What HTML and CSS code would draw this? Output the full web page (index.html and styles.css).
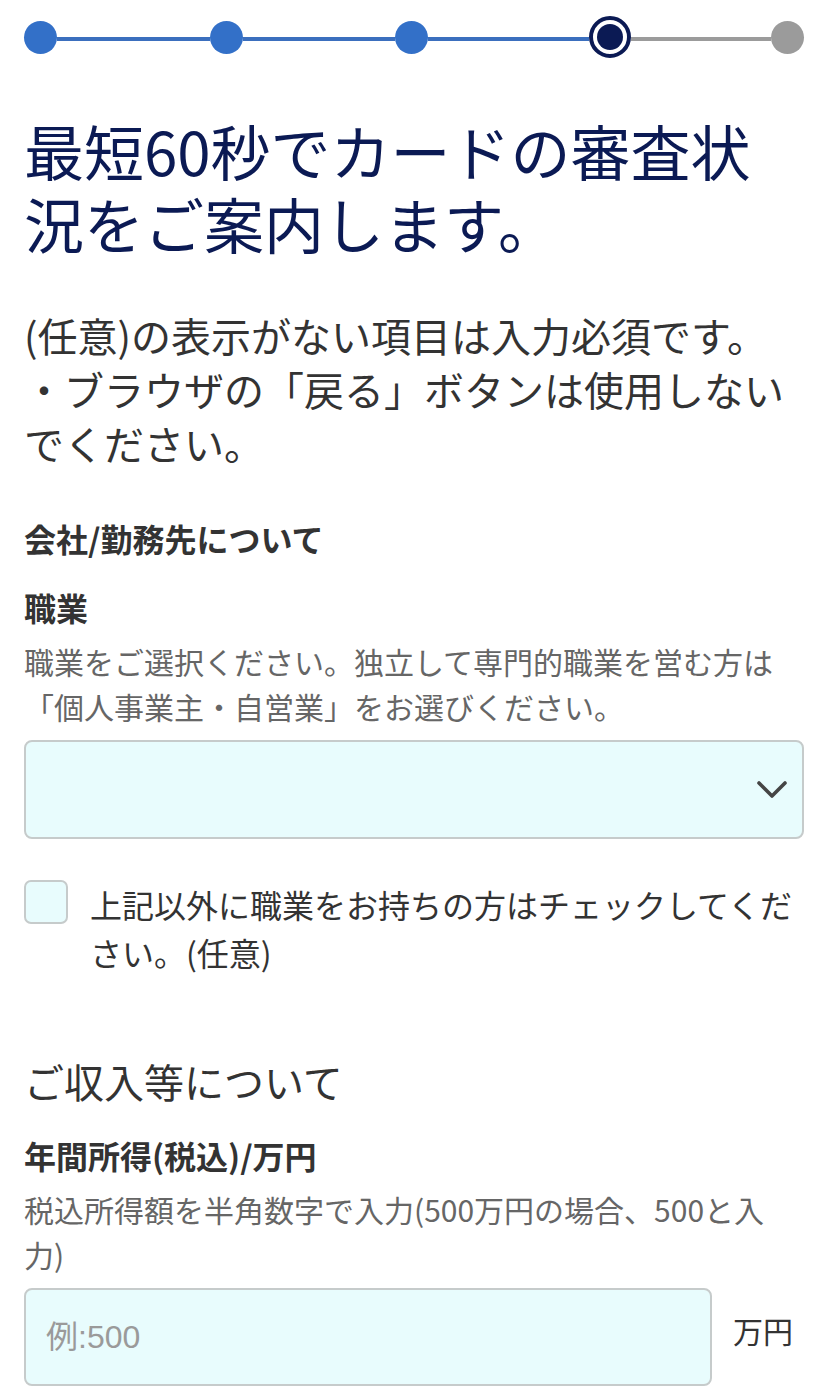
FILE: index.html
```html
<!DOCTYPE html>
<html lang="ja">
<head>
  <meta charset="UTF-8" />
  <meta name="viewport" content="width=device-width, initial-scale=1" />
  <title>お申し込み</title>
  <link rel="stylesheet" href="styles.css">
</head>
<body>
  <!-- Progress steps -->
  <div class="stepper">
    <span class="dot done"></span>
    <span class="bar done"></span>
    <span class="dot done"></span>
    <span class="bar done"></span>
    <span class="dot done"></span>
    <span class="bar done wide"></span>
    <span class="dot current"><span class="core"></span></span>
    <span class="bar narrow"></span>
    <span class="dot"></span>
  </div>

  <h1 class="title">最短60秒でカードの審査状況をご案内します。</h1>

  <p class="notice">(任意)の表示がない項目は入力必須です。<br>・ブラウザの「戻る」ボタンは使用しないでください。</p>

  <h2 class="section-label">会社/勤務先について</h2>

  <div class="field">
    <label class="field-label" for="job">職業</label>
    <p class="hint">職業をご選択ください。独立して専門的職業を営む方は「個人事業主・自営業」をお選びください。</p>
    <div class="select-wrap">
      <select id="job" class="select">
        <option value=""></option>
      </select>
      <svg class="chevron" width="30" height="18" viewBox="0 0 30 18" aria-hidden="true">
        <path d="M2 2 L15 15 L28 2" fill="none" stroke="#454545" stroke-width="3.6" stroke-linecap="round" stroke-linejoin="round" />
      </svg>
    </div>
  </div>

  <label class="check-row">
    <input type="checkbox" class="check" />
    <span class="check-text">上記以外に職業をお持ちの方はチェックしてください。(任意)</span>
  </label>

  <h2 class="section-title">ご収入等について</h2>

  <div class="field">
    <label class="field-label" for="income">年間所得(税込)/万円</label>
    <p class="hint">税込所得額を半角数字で入力(500万円の場合、500と入力)</p>
    <div class="input-row">
      <input id="income" class="text-input" type="text" placeholder="例:500" />
      <span class="unit">万円</span>
    </div>
  </div>
</body>
</html>
```

FILE: styles.css
```css
:root {
  --step-blue: #3370c8;
  --step-line: #3b6fbe;
  --navy: #0b1a54;
  --step-grey: #9b9b9b;
  --text: #333;
  --hint: #666;
  --field-bg: #e8fcfd;
  --field-border: #c6cbcb;
}

body {
  margin: 0;
  padding: 0 24px;
  background: #fff;
  font-family: "Noto Sans CJK JP", "Noto Sans", sans-serif;
  color: var(--text);
}

/* Stepper */
.stepper {
  display: flex;
  align-items: center;
  height: 42px;
  padding-top: 16px;
}

.dot {
  flex: none;
  width: 33px;
  height: 33px;
  border-radius: 50%;
  background: var(--step-grey);
}

.dot.done {
  background: var(--step-blue);
}

.dot.current {
  width: 42px;
  height: 42px;
  box-sizing: border-box;
  border: 4px solid var(--navy);
  background: #fff;
  display: flex;
  align-items: center;
  justify-content: center;
}

.dot.current .core {
  width: 26px;
  height: 26px;
  border-radius: 50%;
  background: var(--navy);
}

.bar {
  flex: 1;
  height: 4px;
  background: var(--step-grey);
  margin-top: 3px;
}

.bar.done {
  background: var(--step-line);
}

.bar.wide {
  flex: 1.05;
}

.bar.narrow {
  flex: 0.92;
}

/* Headings and copy */
.title {
  margin: 55px 0 0;
  font-size: 60px;
  line-height: 73px;
  font-weight: 400;
  color: var(--navy);
}

.notice {
  margin: 49px 0 0;
  font-size: 40px;
  line-height: 54px;
  color: var(--text);
}

.section-label {
  margin: 46px 0 0;
  font-size: 32px;
  line-height: 44px;
  font-weight: 700;
}

.section-title {
  margin: 77px 0 0;
  font-size: 40px;
  line-height: 56px;
  font-weight: 400;
}

/* Fields */
.field-label {
  display: block;
  margin-top: 25px;
  font-size: 32px;
  line-height: 44px;
  font-weight: 700;
}

.section-title + .field .field-label {
  margin-top: 24px;
}

.hint {
  margin: 10px 0 0;
  font-size: 30px;
  line-height: 45px;
  color: var(--hint);
}

.select-wrap {
  position: relative;
  margin-top: 11px;
}

.select {
  display: block;
  width: 100%;
  height: 99px;
  box-sizing: border-box;
  appearance: none;
  -webkit-appearance: none;
  background: var(--field-bg);
  border: 2px solid var(--field-border);
  border-radius: 8px;
  font: inherit;
  font-size: 32px;
}

.chevron {
  position: absolute;
  right: 17px;
  top: 41px;
  pointer-events: none;
}

.check-row {
  display: flex;
  align-items: flex-start;
  margin-top: 41px;
}

.check {
  flex: none;
  appearance: none;
  -webkit-appearance: none;
  width: 44px;
  height: 44px;
  margin: 0;
  box-sizing: border-box;
  background: var(--field-bg);
  border: 2px solid var(--field-border);
  border-radius: 7px;
}

.check-text {
  margin-left: 22px;
  font-size: 32px;
  line-height: 48px;
  color: var(--text);
}

.input-row {
  display: flex;
  align-items: center;
  margin-top: 11px;
}

.text-input {
  flex: none;
  width: 688px;
  height: 98px;
  box-sizing: border-box;
  padding: 0 20px;
  background: var(--field-bg);
  border: 2px solid var(--field-border);
  border-radius: 8px;
  font-family: "Liberation Sans", "Noto Sans CJK JP", sans-serif;
  font-size: 32px;
  color: var(--text);
}

.text-input::placeholder {
  color: #9a9a9a;
}

.unit {
  margin-left: 21px;
  margin-top: -14px;
  font-size: 30px;
  color: var(--text);
}
```
